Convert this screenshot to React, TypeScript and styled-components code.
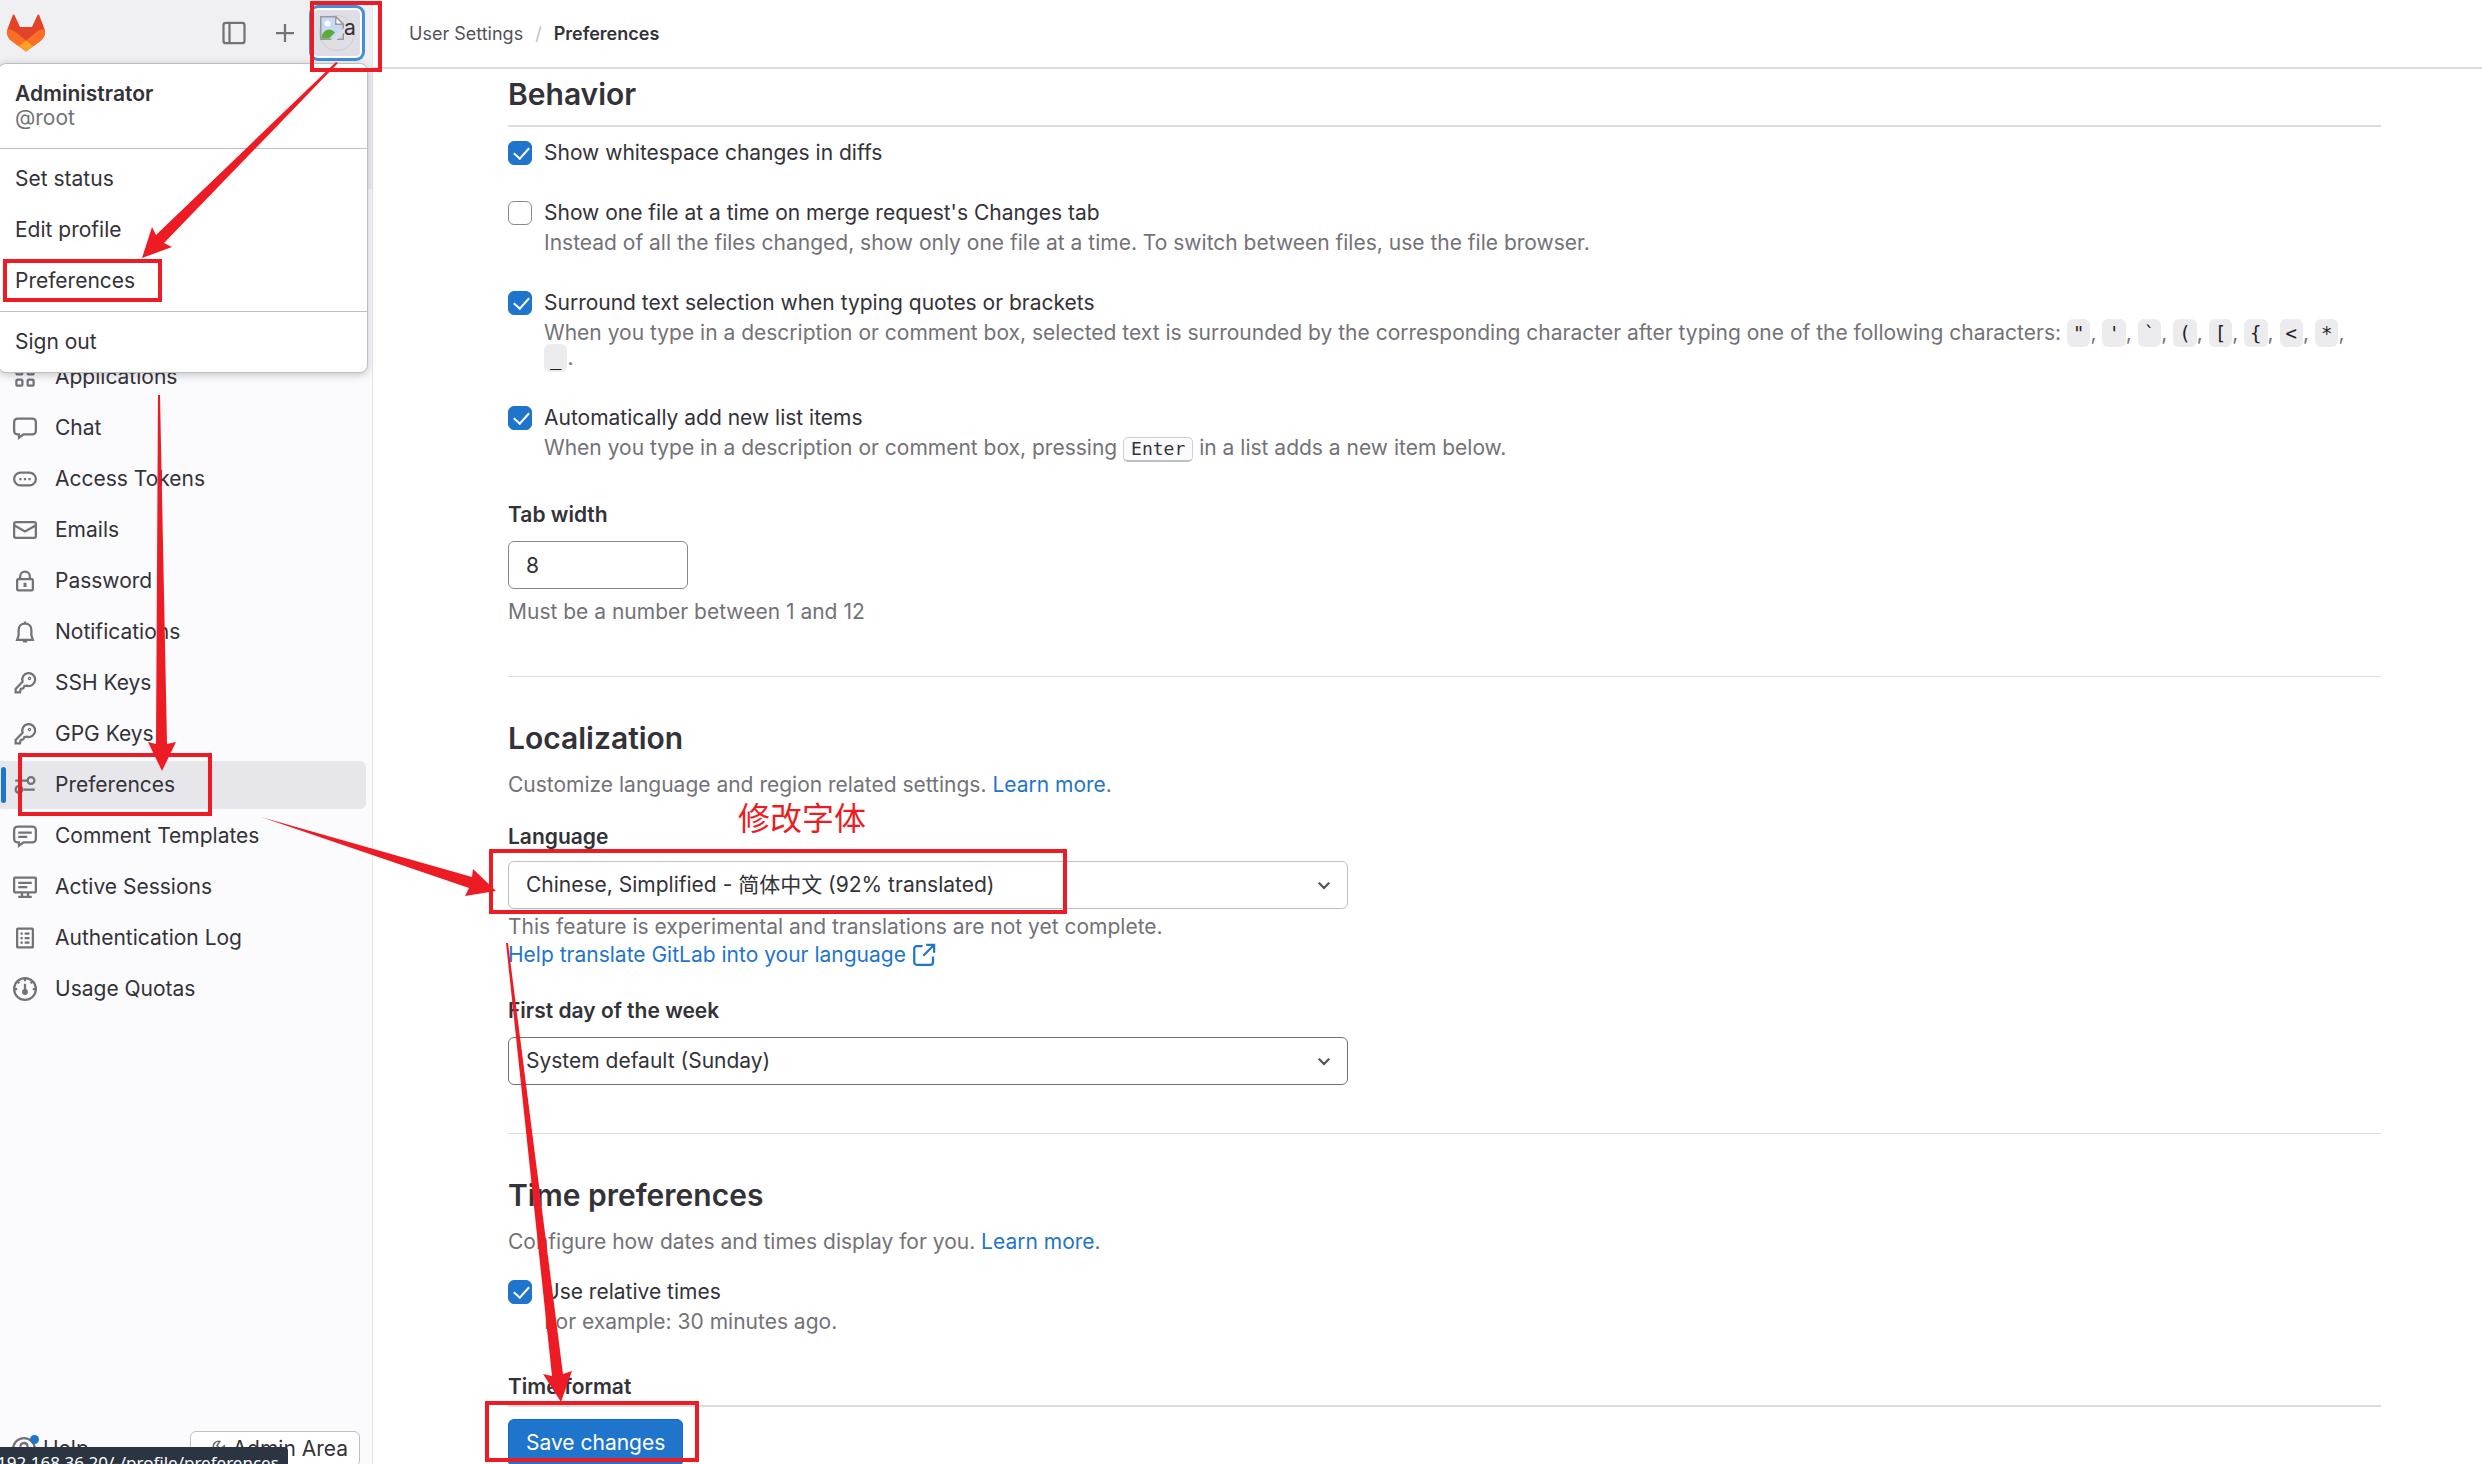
import React from 'react';
import styled, { createGlobalStyle } from 'styled-components';

const ink = '#333238';
const muted = '#737278';
const link = '#1f75cb';
const line = '#dcdcde';
const mark = '#ed1c24';

const GlobalStyle = createGlobalStyle`
  * { box-sizing: border-box; }
  body {
    margin: 0;
    overflow: hidden;
    background: #fff;
    color: ${ink};
    font: 400 21px/28px Inter, "Noto Sans CJK SC", sans-serif;
  }
  button, input, select { font: inherit; color: inherit; }
  a { color: ${link}; text-decoration: none; }
`;

const Shell = styled.div`
  position: relative;
  display: flex;
  height: 100vh;
  overflow: hidden;
`;

const Sidebar = styled.aside`
  position: relative;
  flex: none;
  display: flex;
  flex-direction: column;
  width: 373px;
  background: #fbfafd;
  border-right: 1px solid #e7e6ea;
`;

const UserBar = styled.div`
  flex: none;
  height: 189px;
  background: #f0f0f3;
`;

const BarRow = styled.div`
  display: flex;
  align-items: center;
  height: 66px;
  padding: 0 8px 0 6px;
`;

const Brand = styled.a`
  display: flex;
  margin-right: auto;
`;

const BarButton = styled.button`
  display: flex;
  align-items: center;
  justify-content: center;
  width: 51px;
  height: 48px;
  padding: 0;
  border: 0;
  background: none;
  color: ${muted};
`;

const AvatarButton = styled.button`
  display: flex;
  align-items: center;
  justify-content: center;
  width: 54px;
  height: 54px;
  padding: 0;
  border: 2px solid #428fdc;
  border-radius: 8px;
  background: #dfdee4;
  box-shadow: 0 0 0 1px #428fdc, inset 0 0 0 2px #fff;
`;

const AvatarImage = styled.span`
  display: flex;
  align-items: flex-start;
  width: 36px;
  height: 36px;
  border: 1px solid #cfced5;
  border-radius: 50%;
  line-height: 24px;
  svg { flex: none; }
`;

const Menu = styled.div`
  position: absolute;
  top: 63px;
  left: -2px;
  z-index: 2;
  width: 370px;
  background: #fff;
  border: 1px solid #bfbfc3;
  border-radius: 8px;
  box-shadow: 0 2px 8px rgba(31, 30, 36, 0.24);
`;

const MenuGroup = styled.div`
  padding: 6px 0;
  & + & { border-top: 1px solid #bfbfc3; }
`;

const Account = styled.div`
  padding: 12px 16px;
  line-height: 24px;
  color: ${muted};
  strong {
    display: block;
    font-weight: 600;
    color: ${ink};
  }
`;

const MenuLink = styled.a`
  display: block;
  padding: 0 16px;
  line-height: 48px;
  color: ${ink};
  & + & { margin-top: 3px; }
`;

const Nav = styled.nav`
  display: flex;
  flex-direction: column;
  gap: 3px;
  margin-top: 164px;
`;

const NavLink = styled.a<{ $active?: boolean }>`
  display: flex;
  align-items: center;
  gap: 18px;
  height: 48px;
  margin-right: 6px;
  padding-left: 1px;
  border-radius: 0 6px 6px 0;
  color: ${ink};
  background: ${(p) => (p.$active ? '#e7e6eb' : 'transparent')};
  &::before {
    content: '';
    width: 5px;
    height: 36px;
    margin-right: -11px;
    border-radius: 3px;
    background: ${(p) => (p.$active ? link : 'transparent')};
  }
`;

const SideFooter = styled.div`
  display: flex;
  justify-content: space-between;
  margin-top: auto;
  height: 33px;
  padding: 0 12px;
`;

const FooterButton = styled.button<{ $outlined?: boolean }>`
  position: relative;
  display: flex;
  align-items: center;
  gap: 7px;
  height: 36px;
  padding: 0 11px 0 ${(p) => (p.$outlined ? 17 : 0)}px;
  border: ${(p) => (p.$outlined ? '1px solid #bfbfc3' : '0')};
  border-radius: 6px;
  background: ${(p) => (p.$outlined ? '#fff' : 'transparent')};
  svg { color: ${muted}; }
`;

const Dot = styled.span`
  position: absolute;
  top: 4px;
  left: 18px;
  width: 9px;
  height: 9px;
  border-radius: 50%;
  background: ${link};
`;

const StatusBar = styled.div`
  position: absolute;
  left: 0;
  bottom: 0;
  z-index: 3;
  width: 288px;
  height: 17px;
  overflow: hidden;
  border-top-right-radius: 4px;
  background: #2b3542;
  color: #fff;
  font: 17px/32px "Noto Sans", sans-serif;
  text-indent: -3px;
  white-space: nowrap;
`;

const Main = styled.main`
  flex: 1;
  min-width: 0;
  display: flex;
  flex-direction: column;
`;

const TopBar = styled.header`
  flex: none;
  display: flex;
  align-items: center;
  gap: 12px;
  height: 69px;
  padding-left: 36px;
  border-bottom: 2px solid ${line};
  font-size: 18px;
  a { color: #535158; }
  span { color: #bfbfc3; }
  strong { font-weight: 600; }
`;

const Body = styled.div`
  flex: 1;
  min-height: 0;
  overflow: hidden;
  padding: 0 101px 0 135px;
`;

const Section = styled.section`
  padding-bottom: 48px;
  & + & {
    border-top: 1px solid ${line};
    padding-top: 41px;
  }
`;

const Title = styled.h2<{ $ruled?: boolean }>`
  margin: 0;
  font-size: 30px;
  line-height: 40px;
  font-weight: 600;
  ${(p) => p.$ruled && `padding: 5px 0 11px; border-bottom: 2px solid ${line}; margin-bottom: 14px;`}
`;

const Lead = styled.p`
  margin: 13px 0 24px;
  line-height: 28px;
  color: ${muted};
`;

const Check = styled.div`
  display: grid;
  grid-template-columns: 24px 1fr;
  column-gap: 12px;
  margin-bottom: 36px;
`;

const Tick = styled.input`
  appearance: none;
  width: 24px;
  height: 24px;
  margin: 0;
  border: 1px solid #89888d;
  border-radius: 6px;
  background: #fff;
  &:checked {
    border-color: ${link};
    background: ${link};
  }
  &:checked::after {
    content: '';
    display: block;
    width: 7px;
    height: 13px;
    margin: 2px 0 0 8px;
    border: solid #fff;
    border-width: 0 2px 2px 0;
    transform: rotate(42deg);
  }
`;

const CheckLabel = styled.label`
  line-height: 24px;
`;

const CheckHelp = styled.div`
  grid-column: 2;
  margin-top: 5px;
  padding-right: 24px;
  line-height: 25px;
  color: ${muted};
`;

const Code = styled.code`
  padding: 3px 6px;
  border-radius: 6px;
  background: #ececef;
  color: #1f1e24;
  font: 19px/24px "DejaVu Sans Mono", "Liberation Mono", monospace;
`;

const Key = styled.kbd`
  display: inline-block;
  padding: 0 7px;
  border: 1px solid #cfced5;
  border-bottom: 2px solid #bfbfc3;
  border-radius: 5px;
  background: #fbfafd;
  color: ${ink};
  font: 18px/22px "DejaVu Sans Mono", "Liberation Mono", monospace;
`;

const FieldLabel = styled.label<{ $tight?: boolean }>`
  display: block;
  margin-bottom: ${(p) => (p.$tight ? 10 : 12)}px;
  line-height: 28px;
  font-weight: 600;
  ${Check} + & { margin-top: 39px; }
`;

const NumberBox = styled.input`
  display: block;
  width: 180px;
  height: 48px;
  padding: 0 17px;
  border: 1px solid #89888d;
  border-radius: 6px;
  background: #fff;
`;

const Hint = styled.div`
  margin: 9px 0 2px;
  color: ${muted};
`;

const TightHint = styled(Hint)`
  margin: 4px 0 28px;
`;

const SelectWrap = styled.div`
  display: grid;
  max-width: 840px;
  align-items: center;
  svg {
    grid-area: 1 / 1;
    justify-self: end;
    margin-right: 12px;
    pointer-events: none;
    color: #535158;
  }
`;

const SelectBox = styled.select<{ $soft?: boolean }>`
  grid-area: 1 / 1;
  appearance: none;
  width: 100%;
  height: 48px;
  padding: 0 17px;
  border: 1px solid ${(p) => (p.$soft ? '#bfbfc3' : '#737278')};
  border-radius: 6px;
  background: #fff;
`;

const HelpLink = styled.a`
  display: inline-flex;
  align-items: center;
  gap: 6px;
`;

const SaveBar = styled.footer`
  flex: none;
  height: 59px;
  margin: 0 101px 0 135px;
  padding-top: 12px;
  border-top: 2px solid ${line};
`;

const SaveButton = styled.button`
  height: 48px;
  padding: 0 17px;
  border: 1px solid #1068bf;
  border-radius: 6px;
  background: ${link};
  color: #fff;
`;

const Overlay = styled.svg`
  position: absolute;
  top: 0;
  left: 0;
  z-index: 4;
  pointer-events: none;
`;

const Note = styled.div`
  position: absolute;
  top: 798px;
  left: 738px;
  z-index: 4;
  color: ${mark};
  font: 32px/36px "Noto Sans CJK SC", sans-serif;
`;

const icons: Record<string, React.ReactNode> = {
  applications: (
    <g>
      <rect x="2.25" y="2.25" width="4" height="4" rx="1" />
      <rect x="9.75" y="2.25" width="4" height="4" rx="1" />
      <rect x="2.25" y="9.75" width="4" height="4" rx="1" />
      <rect x="9.75" y="9.75" width="4" height="4" rx="1" />
    </g>
  ),
  chat: <path d="M3 1.75h10A2.25 2.25 0 0 1 15.25 4v6A2.25 2.25 0 0 1 13 12.25H7L4 14.5v-2.25H3A2.25 2.25 0 0 1 .75 10V4A2.25 2.25 0 0 1 3 1.75z" />,
  token: (
    <g>
      <rect x=".75" y="3.75" width="14.5" height="8.5" rx="4.25" />
      <path d="M4.2 8h1.5M7.25 8h1.5M10.3 8h1.5" />
    </g>
  ),
  mail: (
    <g>
      <rect x=".75" y="2.75" width="14.5" height="10.5" rx="1.25" />
      <path d="M1 5l7 4 7-4" />
    </g>
  ),
  lock: (
    <g>
      <rect x="2.75" y="6.75" width="10.5" height="7.5" rx=".75" />
      <path d="M4.75 6.5V5a3.25 3.25 0 0 1 6.5 0v1.5" />
      <path d="M8 9.2v2.8" strokeWidth="2" />
    </g>
  ),
  bell: (
    <g>
      <path d="M2.75 13.2h10.5l-1-3V6.8C12.25 4 10.5 2.4 8 2.4S3.75 4 3.75 6.8v3.4zM8 1v1.4" />
      <path d="M6.5 14.2h3" />
    </g>
  ),
  key: (
    <g>
      <path d="M6.4 7.1A4.3 4.3 0 1 1 9.2 9.8L7.6 10 6.8 11.6 5.2 12 4.6 14.25H1.75V12z" />
      <circle cx="11" cy="5" r=".4" />
    </g>
  ),
  sliders: (
    <g>
      <path d="M1.5 5h8M7 11h7.5" />
      <circle cx="12" cy="5" r="2.25" />
      <circle cx="4" cy="11" r="2.25" />
    </g>
  ),
  comment: (
    <g>
      <path d="M3 1.75h10A2.25 2.25 0 0 1 15.25 4v6A2.25 2.25 0 0 1 13 12.25H7L4 14.5v-2.25H3A2.25 2.25 0 0 1 .75 10V4A2.25 2.25 0 0 1 3 1.75z" />
      <path d="M3.5 5.75h9M3.5 8.5h6" />
    </g>
  ),
  monitor: (
    <g>
      <rect x=".75" y="1.75" width="14.5" height="9.75" rx=".5" />
      <path d="M3.5 5.25h9M3.5 8h6M6 11.5V14M10 11.5V14M3.5 14.5h9" />
    </g>
  ),
  log: (
    <g>
      <rect x="2.75" y="1.75" width="10.5" height="12.5" rx=".5" />
      <path d="M5 5h1.5M5 8h1.5M5 11h1.5M7.8 5h3.2M7.8 8h3.2M7.8 11h3.2" />
    </g>
  ),
  gauge: (
    <g>
      <circle cx="8" cy="8" r="7.25" />
      <path d="M8 4.5v5M8 1v1.8M1 8h1.8M13.2 8H15M3.2 3.2l1 1M12.8 3.2l-1 1" />
      <circle cx="8" cy="10" r="1.2" fill="currentColor" />
    </g>
  ),
  panel: (
    <g>
      <rect x="1" y="1.25" width="14" height="13.5" rx="1.5" />
      <path d="M5 1.5v13" />
    </g>
  ),
  plus: <path d="M8 2v12M2 8h12" />,
  help: (
    <g>
      <circle cx="8" cy="8" r="7.25" />
      <path d="M5.6 6.5a2.4 2.4 0 1 1 3.6 2C8.4 9 8 9.3 8 10M8 11.7v.6" />
    </g>
  ),
  wrench: <path d="M10.5 1.3A4.5 4.5 0 0 0 5 7L1.8 10.7a2.3 2.3 0 0 0 3.4 3.4L9 10.7a4.5 4.5 0 0 0 5.5-5.5L11 8 8 5z" />,
  chevron: <path d="M4.5 6.5L8 10l3.5-3.5" />,
  external: (
    <g>
      <path d="M7 2H3.2A1.7 1.7 0 0 0 1.5 3.7v9.1a1.7 1.7 0 0 0 1.7 1.7h9.1a1.7 1.7 0 0 0 1.7-1.7V9" />
      <path d="M9.5 1.25h5.25V6.5M14.5 1.5L7.5 8.5" />
    </g>
  ),
};

function Icon({ name, size = 24 }: { name: string; size?: number }) {
  return (
    <svg width={size} height={size} viewBox="0 0 16 16" fill="none" stroke="currentColor" strokeWidth="1.5" aria-hidden="true">
      {icons[name]}
    </svg>
  );
}

const NavIcon = styled.span`
  display: flex;
  color: ${muted};
`;

function Logo() {
  return (
    <svg width="40" height="38" viewBox="0 0 40 38" aria-hidden="true">
      <path d="M8.5 1L14 13h12L31.5 1c.5-1 1.5-.6 1.8.2L38.5 15c1.2 5-.5 9-3.5 11.5L20 37.5 5 26.5C2 24 .3 20 1.5 15L6.7 1.2C7 .4 8 0 8.5 1z" fill="#e24329" />
      <path d="M38.5 15c1.2 5-.5 9-3.5 11.5l-7.5 5.5L20 26.5 30.5 18c3-2.3 5.5-3 8-3zM1.5 15c-1.2 5 .5 9 3.5 11.5l7.5 5.5L20 26.5 9.5 18c-3-2.3-5.5-3-8-3z" fill="#fc6d26" />
      <path d="M12.5 32L20 26.5 27.5 32 20 37.5z" fill="#fca326" />
    </svg>
  );
}

function BrokenImage() {
  return (
    <svg width="24" height="24" viewBox="0 0 16 16" aria-hidden="true">
      <path d="M.5 .5h10l5 5v10H.5z" fill="#c7d9f5" stroke="#9a9a9a" />
      <path d="M10.5 .5v5h5z" fill="#fff" stroke="#9a9a9a" />
      <circle cx="5" cy="5" r="2" fill="#fff" />
      <path d="M1 15c0-4 3-6 5-6s3 1 4 2l-4 4z" fill="#5bab3a" />
      <path d="M7 16l9-8v3l-5 5z" fill="#dfdee4" />
    </svg>
  );
}

const links: [string, string][] = [
  ['applications', 'Applications'],
  ['chat', 'Chat'],
  ['token', 'Access Tokens'],
  ['mail', 'Emails'],
  ['lock', 'Password'],
  ['bell', 'Notifications'],
  ['key', 'SSH Keys'],
  ['key', 'GPG Keys'],
  ['sliders', 'Preferences'],
  ['comment', 'Comment Templates'],
  ['monitor', 'Active Sessions'],
  ['log', 'Authentication Log'],
  ['gauge', 'Usage Quotas'],
];

const chars = ['"', "'", '`', '(', '[', '{', '<', '*'];

function CheckItem({ id, label, on, children }: { id: string; label: string; on?: boolean; children?: React.ReactNode }) {
  return (
    <Check>
      <Tick type="checkbox" id={id} defaultChecked={on} />
      <CheckLabel htmlFor={id}>{label}</CheckLabel>
      {children && <CheckHelp>{children}</CheckHelp>}
    </Check>
  );
}

export default function App() {
  return (
    <Shell>
      <GlobalStyle />
      <Sidebar>
        <UserBar>
          <BarRow>
            <Brand href="#" aria-label="Homepage"><Logo /></Brand>
            <BarButton aria-label="Hide sidebar"><Icon name="panel" /></BarButton>
            <BarButton aria-label="Create new"><Icon name="plus" /></BarButton>
            <AvatarButton>
              <AvatarImage><BrokenImage />a</AvatarImage>
            </AvatarButton>
          </BarRow>
        </UserBar>
        <Menu>
          <MenuGroup>
            <Account><strong>Administrator</strong>@root</Account>
          </MenuGroup>
          <MenuGroup>
            <MenuLink href="#">Set status</MenuLink>
            <MenuLink href="#">Edit profile</MenuLink>
            <MenuLink href="#">Preferences</MenuLink>
          </MenuGroup>
          <MenuGroup>
            <MenuLink href="#">Sign out</MenuLink>
          </MenuGroup>
        </Menu>
        <Nav>
          {links.map(([icon, text]) => (
            <NavLink key={text} href="#" $active={text === 'Preferences'}>
              <NavIcon><Icon name={icon} /></NavIcon>
              {text}
            </NavLink>
          ))}
        </Nav>
        <SideFooter>
          <FooterButton><Icon name="help" />Help<Dot /></FooterButton>
          <FooterButton $outlined><Icon name="wrench" size={18} />Admin Area</FooterButton>
        </SideFooter>
      </Sidebar>

      <Main>
        <TopBar>
          <a href="#">User Settings</a>
          <span>/</span>
          <strong>Preferences</strong>
        </TopBar>
        <Body>
          <Section>
            <Title $ruled>Behavior</Title>
            <CheckItem id="whitespace" label="Show whitespace changes in diffs" on />
            <CheckItem id="onefile" label="Show one file at a time on merge request's Changes tab">
              Instead of all the files changed, show only one file at a time. To switch between files, use the file browser.
            </CheckItem>
            <CheckItem id="surround" label="Surround text selection when typing quotes or brackets" on>
              When you type in a description or comment box, selected text is surrounded by the corresponding character after typing one of the following characters:{' '}
              {chars.map((c) => (
                <React.Fragment key={c}><Code>{c}</Code>, </React.Fragment>
              ))}
              <Code>_</Code>.
            </CheckItem>
            <CheckItem id="lists" label="Automatically add new list items" on>
              When you type in a description or comment box, pressing <Key>Enter</Key> in a list adds a new item below.
            </CheckItem>
            <FieldLabel htmlFor="tab">Tab width</FieldLabel>
            <NumberBox id="tab" defaultValue="8" />
            <Hint>Must be a number between 1 and 12</Hint>
          </Section>

          <Section>
            <Title>Localization</Title>
            <Lead>Customize language and region related settings. <a href="#">Learn more</a>.</Lead>
            <FieldLabel htmlFor="language" $tight>Language</FieldLabel>
            <SelectWrap>
              <SelectBox id="language" $soft><option>Chinese, Simplified - 简体中文 (92% translated)</option></SelectBox>
              <Icon name="chevron" />
            </SelectWrap>
            <TightHint>
              This feature is experimental and translations are not yet complete.
              <br />
              <HelpLink href="#">Help translate GitLab into your language <Icon name="external" /></HelpLink>
            </TightHint>
            <FieldLabel htmlFor="week">First day of the week</FieldLabel>
            <SelectWrap>
              <SelectBox id="week"><option>System default (Sunday)</option></SelectBox>
              <Icon name="chevron" />
            </SelectWrap>
          </Section>

          <Section>
            <Title>Time preferences</Title>
            <Lead>Configure how dates and times display for you. <a href="#">Learn more</a>.</Lead>
            <CheckItem id="relative" label="Use relative times" on>For example: 30 minutes ago.</CheckItem>
            <FieldLabel as="div">Time format</FieldLabel>
          </Section>
        </Body>
        <SaveBar>
          <SaveButton>Save changes</SaveButton>
        </SaveBar>
      </Main>

      <StatusBar>192.168.36.20/-/profile/preferences</StatusBar>
      <Note>修改字体</Note>
      <Overlay width="1100" height="1464" viewBox="0 0 1100 1464" aria-hidden="true">
        <g fill="none" stroke={mark} strokeWidth="4">
          <rect x="312" y="3" width="68" height="67" />
          <rect x="5" y="261" width="155" height="39" />
          <rect x="20" y="755" width="190" height="59" />
          <rect x="491" y="851" width="574" height="61" />
          <rect x="487" y="1403" width="210" height="57" />
        </g>
        <g fill={mark}>
          <path d="M336 62l2 1L164 243l8 4-30 11 10-31 4 8z" />
          <path d="M158 395h2l7 349 9-2-14 29-14-29 8 2z" />
          <path d="M261 817L472 877l1-8 23 22-31 5 4-8z" />
          <path d="M506 943h2l55 431 9-3-11 31-18-28 9 2z" />
        </g>
      </Overlay>
    </Shell>
  );
}
